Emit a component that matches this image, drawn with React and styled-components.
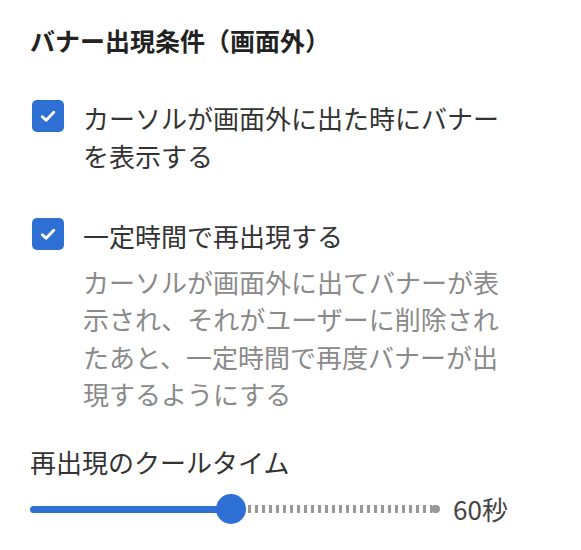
import React, { useState } from 'react';
import styled, { createGlobalStyle } from 'styled-components';

const GlobalStyle = createGlobalStyle`
  body {
    margin: 0;
    background: #fff;
    font-family: "Noto Sans CJK JP", "Noto Sans", sans-serif;
  }
`;

const Panel = styled.div`
  padding: 22px 0 0 30px;
  display: flex;
  flex-direction: column;
`;

const Title = styled.h2`
  margin: 0 0 40px;
  font-size: 25px;
  line-height: 37px;
  font-weight: 700;
  color: #222;
`;

const OptionRow = styled.label`
  display: flex;
  align-items: flex-start;
  gap: 19px;
  margin: 0 0 ${(p) => p.$gap}px 2px;
  cursor: pointer;
`;

const Box = styled.span`
  flex: none;
  width: 32px;
  height: 32px;
  margin-top: 1px;
  border-radius: 5px;
  background: ${(p) => (p.$checked ? '#2d6fd3' : '#fff')};
  border: ${(p) => (p.$checked ? 'none' : '2px solid #999')};
  box-sizing: border-box;
  display: flex;
  align-items: center;
  justify-content: center;
`;

const OptionText = styled.div`
  width: 16.2em;
  font-size: 26px;
  line-height: 37.5px;
  color: #333;
`;

const Description = styled.div`
  margin-top: 8px;
  color: #8a8a8a;
`;

const FieldLabel = styled.div`
  margin: 30px 0 10px;
  font-size: 26px;
  line-height: 37.5px;
  color: #333;
`;

const SliderRow = styled.div`
  display: flex;
  align-items: center;
  gap: 13px;
`;

const Track = styled.div`
  position: relative;
  width: 410px;
  height: 30px;
`;

const Filled = styled.div`
  position: absolute;
  left: 0;
  top: 12px;
  height: 7px;
  border-radius: 4px;
  background: #2d6fd3;
`;

const Ticks = styled.div`
  position: absolute;
  top: 11px;
  right: 8px;
  height: 8px;
  background: repeating-linear-gradient(
    to right,
    #999 0 2.6px,
    transparent 2.6px 7px
  );
`;

const EndCap = styled.div`
  position: absolute;
  right: 0;
  top: 11px;
  width: 8px;
  height: 8px;
  border-radius: 2px 4px 4px 2px;
  background: #999;
`;

const Thumb = styled.div`
  position: absolute;
  top: 0;
  width: 30px;
  height: 30px;
  margin-left: -15px;
  border-radius: 50%;
  background: #2d6fd3;
`;

const Value = styled.span`
  font-size: 26px;
  color: #444;
`;

const Check = () => (
  <svg width="20" height="20" viewBox="0 0 18 18">
    <path d="M3.8 9.6 L7.3 12.8 L14.2 5.6" fill="none" stroke="#fff" strokeWidth="2.6" strokeLinecap="round" strokeLinejoin="round" />
  </svg>
);

const Option = ({ checked, onToggle, gap, children }) => (
  <OptionRow $gap={gap} onClick={onToggle}>
    <Box $checked={checked}>{checked && <Check />}</Box>
    <OptionText>{children}</OptionText>
  </OptionRow>
);

const App = () => {
  const [showBanner, setShowBanner] = useState(true);
  const [reappear, setReappear] = useState(true);
  const cooltime = 60;
  const pos = 49; // percent of track

  return (
    <>
      <GlobalStyle />
      <Panel>
        <Title>バナー出現条件（画面外）</Title>
        <Option checked={showBanner} onToggle={() => setShowBanner(!showBanner)} gap={43}>
          カーソルが画面外に出た時にバナーを表示する
        </Option>
        <Option checked={reappear} onToggle={() => setReappear(!reappear)} gap={0}>
          一定時間で再出現する
          <Description>
            カーソルが画面外に出てバナーが表示され、それがユーザーに削除されたあと、一定時間で再度バナーが出現するようにする
          </Description>
        </Option>
        <FieldLabel>再出現のクールタイム</FieldLabel>
        <SliderRow>
          <Track>
            <Filled style={{ width: `${pos}%` }} />
            <Ticks style={{ left: `calc(${pos}% + 17px)` }} />
            <EndCap />
            <Thumb style={{ left: `${pos}%` }} />
          </Track>
          <Value>{cooltime}秒</Value>
        </SliderRow>
      </Panel>
    </>
  );
};

export default App;
